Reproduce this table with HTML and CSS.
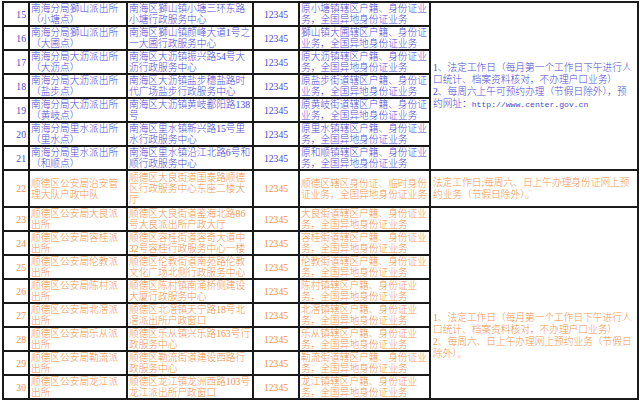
FILE: index.html
```html
<!DOCTYPE html>
<html lang="zh-CN">
<head>
<meta charset="utf-8">
<title>户政办理网点</title>
<link rel="stylesheet" href="styles.css">
</head>
<body>
<table class="sheet">
  <colgroup>
    <col class="c-num"><col class="c-name"><col class="c-addr"><col class="c-tel"><col class="c-biz"><col class="c-note">
  </colgroup>
  <tbody>
    <tr class="blue">
      <td class="num">15</td>
      <td>南海分局獅山派出所<br>（小塘点）</td>
      <td>南海区獅山镇小塘三环东路<br>小塘行政服务中心</td>
      <td class="tel">12345</td>
      <td>原小塘镇辖区户籍、身份证业<br>务，全国异地身份证业务</td>
      <td class="note" rowspan="7">1、法定工作日（每月第一个工作日下午进行人<br>口统计、档案资料核对，不办理户口业务）<br>2、每周六上午可预约办理（节假日除外），预<br>约网址：<span class="url">http://www.center.gov.cn</span></td>
    </tr>
    <tr class="blue">
      <td class="num">16</td>
      <td>南海分局獅山派出所<br>（大圃点）</td>
      <td>南海区獅山镇颜峰大道1号之<br>一大圃行政服务中心</td>
      <td class="tel">12345</td>
      <td>獅山镇大圃辖区户籍、身份证<br>业务，全国异地身份证业务</td>
    </tr>
    <tr class="blue">
      <td class="num">17</td>
      <td>南海分局大沥派出所<br>（大沥点）</td>
      <td>南海区大沥镇振兴路54号大<br>沥行政服务中心</td>
      <td class="tel">12345</td>
      <td>原大沥镇辖区户籍、身份证业<br>务，全国异地身份证业务</td>
    </tr>
    <tr class="blue">
      <td class="num">18</td>
      <td>南海分局大沥派出所<br>（盐步点）</td>
      <td>南海区大沥镇盐步穗盐路时<br>代广场盐步行政服务中心</td>
      <td class="tel">12345</td>
      <td>原盐步街道辖区户籍、身份证<br>业务，全国异地身份证业务</td>
    </tr>
    <tr class="blue">
      <td class="num">19</td>
      <td>南海分局大沥派出所<br>（黄岐点）</td>
      <td>南海区大沥镇黄岐鄱阳路138<br>号</td>
      <td class="tel">12345</td>
      <td>原黄岐街道辖区户籍、身份证<br>业务，全国异地身份证业务</td>
    </tr>
    <tr class="blue">
      <td class="num">20</td>
      <td>南海分局里水派出所<br>（里水点）</td>
      <td>南海区里水镇新兴路15号里<br>水行政服务中心</td>
      <td class="tel">12345</td>
      <td>原里水镇辖区户籍、身份证业<br>务，全国异地身份证业务</td>
    </tr>
    <tr class="blue">
      <td class="num">21</td>
      <td>南海分局里水派出所<br>（和顺点）</td>
      <td>南海区里水镇沿江北路6号和<br>顺行政服务中心</td>
      <td class="tel">12345</td>
      <td>原和顺镇辖区户籍、身份证业<br>务，全国异地身份证业务</td>
    </tr>
    <tr class="orange tall">
      <td class="num">22</td>
      <td>顺德区公安局治安管<br>理大队户政中队</td>
      <td>顺德区大良街道国泰路顺德<br>区行政服务中心东座二楼大<br>厅</td>
      <td class="tel">12345</td>
      <td>顺德区辖区身份证、临时身份<br>证业务，全国异地身份证业务</td>
      <td class="note">法定工作日;每周六、日上午办理身份证网上预<br>约业务（节假日除外）。</td>
    </tr>
    <tr class="orange">
      <td class="num">23</td>
      <td>顺德区公安局大良派<br>出所</td>
      <td>顺德区大良街道鉴海北路86<br>号大良派出所户政大厅</td>
      <td class="tel">12345</td>
      <td>大良街道辖区户籍、身份证业<br>务，全国异地身份证业务</td>
      <td class="note note-low" rowspan="8">1、法定工作日（每月第一个工作日下午进行人<br>口统计、档案资料核对，不办理户口业务）<br>2、每周六、日上午办理网上预约业务（节假日<br>除外）。</td>
    </tr>
    <tr class="orange">
      <td class="num">24</td>
      <td>顺德区公安局容桂派<br>出所</td>
      <td>顺德区容桂街道容奇大道中<br>32号容桂行政服务中心一楼</td>
      <td class="tel">12345</td>
      <td>容桂街道辖区户籍、身份证业<br>务，全国异地身份证业务</td>
    </tr>
    <tr class="orange">
      <td class="num">25</td>
      <td>顺德区公安局伦教派<br>出所</td>
      <td>顺德区伦教街道南苑路伦教<br>文化广场北侧行政服务中心</td>
      <td class="tel">12345</td>
      <td>伦教街道辖区户籍、身份证业<br>务，全国异地身份证业务</td>
    </tr>
    <tr class="orange">
      <td class="num">26</td>
      <td>顺德区公安局陈村派<br>出所</td>
      <td>顺德区陈村镇南涌桥侧建设<br>大厦行政服务中心</td>
      <td class="tel">12345</td>
      <td>陈村镇辖区户籍、身份证业<br>务，全国异地身份证业务</td>
    </tr>
    <tr class="orange">
      <td class="num">27</td>
      <td>顺德区公安局北滘派<br>出所</td>
      <td>顺德区北滘镇天宁路18号北<br>滘派出所户政窗口</td>
      <td class="tel">12345</td>
      <td>北滘镇辖区户籍、身份证业<br>务，全国异地身份证业务</td>
    </tr>
    <tr class="orange">
      <td class="num">28</td>
      <td>顺德区公安局乐从派<br>出所</td>
      <td>顺德区乐从镇兴乐路163号行<br>政服务中心</td>
      <td class="tel">12345</td>
      <td>乐从镇辖区户籍、身份证业<br>务，全国异地身份证业务</td>
    </tr>
    <tr class="orange">
      <td class="num">29</td>
      <td>顺德区公安局勒流派<br>出所</td>
      <td>顺德区勒流街道建设西路行<br>政服务中心</td>
      <td class="tel">12345</td>
      <td>勒流街道辖区户籍、身份证业<br>务，全国异地身份证业务</td>
    </tr>
    <tr class="orange">
      <td class="num">30</td>
      <td>顺德区公安局龙江派<br>出所</td>
      <td>顺德区龙江镇龙洲西路103号<br>龙江派出所户政窗口</td>
      <td class="tel">12345</td>
      <td>龙江镇辖区户籍、身份证业<br>务，全国异地身份证业务</td>
    </tr>
  </tbody>
</table>
</body>
</html>
```

FILE: styles.css
```css
html, body {
  margin: 0;
  padding: 0;
  background: #ffffff;
}

body {
  padding: 1px 0 0 2px;
}

.sheet {
  border-collapse: collapse;
  table-layout: fixed;
  width: 637px;
  font-family: "Liberation Serif", "Noto Sans CJK SC", serif;
  font-size: 9.7px;
  font-weight: 300;
  line-height: 11px;
}

.c-num { width: 26px; }
.c-name { width: 98px; }
.c-addr { width: 126px; }
.c-tel { width: 46px; }
.c-biz { width: 131px; }
.c-note { width: 208px; }

.sheet td {
  border: 2px solid #1a1a1a;
  padding: 0 0 0 1px;
  vertical-align: middle;
  white-space: nowrap;
  overflow: hidden;
}

.sheet tr {
  height: 24px;
}

.sheet tr.tall {
  height: 37px;
}

.blue td {
  color: #4a4ad2;
}

.orange td {
  color: #f2934c;
}

.sheet td.num {
  text-align: right;
  padding: 0 2px 0 0;
}

.sheet td.tel {
  text-align: center;
  padding: 0;
}

.sheet td.note {
  line-height: 12px;
  padding-left: 2px;
}

.sheet td.note-low {
  padding-top: 66px;
}

.url {
  font-family: "Liberation Mono", monospace;
  font-size: 8.1px;
}
```
